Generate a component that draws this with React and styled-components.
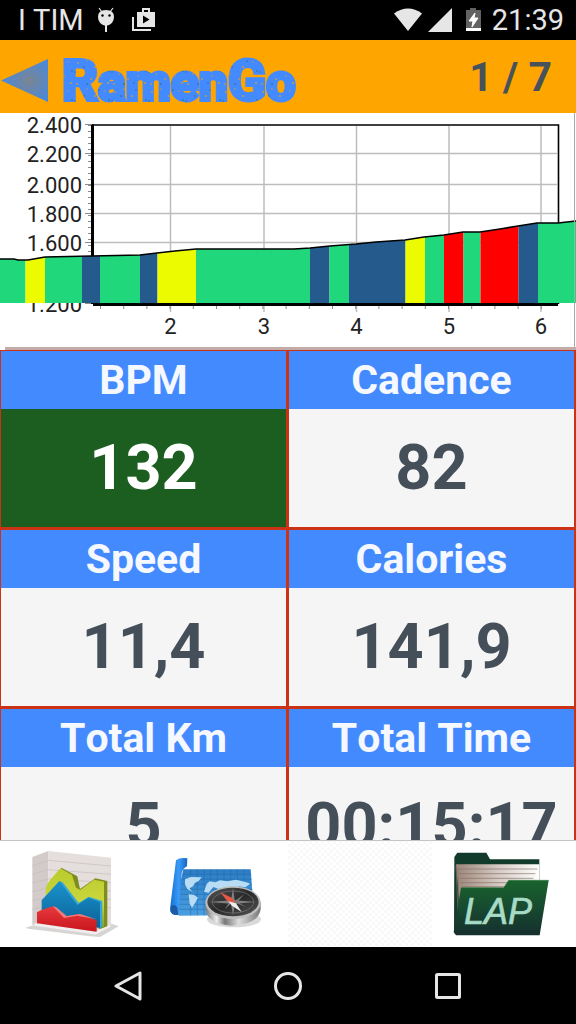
import React from "react";
import styled, { createGlobalStyle } from "styled-components";

const GlobalStyle = createGlobalStyle`
  * {
    box-sizing: border-box;
  }

  body {
    margin: 0;
    background: #000;
    font-family: Roboto, "Liberation Sans", sans-serif;
    font-kerning: none;
  }
`;

const Screen = styled.div`
  display: flex;
  flex-direction: column;
  height: 100vh;
  background: #fff;
  overflow: hidden;
`;

const StatusBar = styled.div`
  display: flex;
  align-items: center;
  justify-content: space-between;
  flex: none;
  height: 40px;
  padding: 0 12px 0 18px;
  background: #000;
  color: #e6e6e6;
  font-size: 29px;
`;

const StatusGroup = styled.div`
  display: flex;
  align-items: center;
  gap: ${(props) => props.$gap};
`;

const Header = styled.header`
  display: flex;
  align-items: center;
  flex: none;
  height: 73px;
  padding-right: 24px;
  background: #ffa500;
`;

const BackButton = styled.button`
  display: flex;
  padding: 0;
  border: 0;
  background: none;
  cursor: pointer;
`;

const Logo = styled.h1`
  display: flex;
  margin: 0;
`;

const PageCounter = styled.span`
  margin-left: auto;
  color: #47525a;
  font-size: 41px;
  font-weight: bold;
`;

const ChartPanel = styled.section`
  flex: none;

  svg {
    display: block;
    width: 100%;
    height: auto;
  }
`;

const MetricGrid = styled.main`
  display: grid;
  grid-template-columns: 1fr 1fr;
  align-content: start;
  flex: 1;
  min-height: 0;
  overflow: hidden;
`;

const MetricCell = styled.section`
  border: solid #cc3315;
  border-width: 1px 2px 2px 1px;
`;

const MetricTitle = styled.h2`
  margin: 0;
  background: #448aff;
  color: #f5f8ff;
  font-size: 41px;
  line-height: 58px;
  text-align: center;
`;

const MetricValue = styled.p`
  margin: 0;
  background: ${(props) => (props.$active ? "#1b5e20" : "#f5f5f5")};
  color: ${(props) => (props.$active ? "#fff" : "#444f59")};
  font-size: 63px;
  font-weight: bold;
  line-height: 118px;
  text-align: center;
  white-space: nowrap;
`;

const Toolbar = styled.nav`
  display: grid;
  grid-template-columns: repeat(4, 1fr);
  flex: none;
  height: 107px;
  border-top: 1px solid #c4c4c4;
  background: repeating-conic-gradient(#f9f9f9 0 25%, #fff 0 50%) 0 0 / 6px 6px;
`;

const ToolButton = styled.button`
  display: flex;
  justify-content: center;
  align-items: center;
  padding: 0;
  border: 0;
  background: #fff;
  cursor: pointer;
`;

const SystemNav = styled.nav`
  display: flex;
  flex: none;
  height: 77px;
  padding: 0 48px;
  background: #000;
`;

const SystemButton = styled.button`
  display: flex;
  flex: 1;
  justify-content: center;
  align-items: center;
  padding: 0;
  border: 0;
  background: none;
  cursor: pointer;

  svg {
    fill: none;
    stroke: #e6e6e6;
    stroke-width: 3;
    stroke-linejoin: round;
  }
`;

const metrics = [
  { title: "BPM", value: "132", active: true },
  { title: "Cadence", value: "82" },
  { title: "Speed", value: "11,4" },
  { title: "Calories", value: "141,9" },
  { title: "Total Km", value: "5" },
  { title: "Total Time", value: "00:15:17" },
];

const GREEN = "#20d77c";
const YELLOW = "#ecfb00";
const BLUE = "#255a8c";
const RED = "#ff0000";

// right edge and slope colour of each stretch of the climb
const bands = [
  [25.5, GREEN],
  [45, YELLOW],
  [82, GREEN],
  [100, BLUE],
  [140, GREEN],
  [157.5, BLUE],
  [196, YELLOW],
  [310, GREEN],
  [329.5, BLUE],
  [349, GREEN],
  [405.5, BLUE],
  [425, YELLOW],
  [444, GREEN],
  [463.5, RED],
  [480.5, GREEN],
  [518.5, RED],
  [538, BLUE],
  [576, GREEN],
];

const profile =
  "0,146 14,146 18,147 28,147 45,144 92,143 140,142 157,140 175,138 196,136 294,136 310,135 330,133 356,131 376,129 405,127 424,124 444,122 463,119 480,119 500,116 518,113 537,110 558,110 576,108";

const yTicks = [
  ["2.400", 12],
  ["2.200", 41],
  ["2.000", 72],
  ["1.800", 101],
  ["1.600", 130],
  ["1.200", 191],
];

const xTicks = [
  ["2", 170.5],
  ["3", 264],
  ["4", 356.5],
  ["5", 449],
  ["6", 541],
];

const ElevationChart = () => (
  <svg viewBox="0 0 576 237" role="img" aria-label="Elevation profile">
    <defs>
      <clipPath id="profile">
        <polygon points={`${profile} 576,190 0,190`} />
      </clipPath>
    </defs>
    <g stroke="#bdbdbd" strokeWidth="1.5">
      {yTicks.slice(1, 5).map(([label, y]) => (
        <line key={label} x1="94" x2="557" y1={y - 0.5} y2={y - 0.5} />
      ))}
      {xTicks.map(([label, x]) => (
        <line key={label} x1={x} x2={x} y1="13" y2="199" />
      ))}
    </g>
    <g stroke="#8c8c8c" strokeWidth="1">
      {yTicks.map(([label, y]) => (
        <line key={label} x1="85" x2="91" y1={y - 0.5} y2={y - 0.5} />
      ))}
      {Array.from({ length: 30 }, (_, i) => 12 + i * 6).map((y) => (
        <line key={y} x1="88" x2="91" y1={y + 0.5} y2={y + 0.5} />
      ))}
      {Array.from({ length: 20 }, (_, i) => 100.5 + i * 23.2).map((x) => (
        <line key={x} x1={x} x2={x} y1="193" y2="196" />
      ))}
    </g>
    <g fill="#222" fontSize="22">
      {yTicks.map(([label, y]) => (
        <text key={label} x="82" y={y + 8} textAnchor="end">
          {label}
        </text>
      ))}
      {xTicks.map(([label, x]) => (
        <text key={label} x={x} y="221" textAnchor="middle">
          {label}
        </text>
      ))}
    </g>
    <path d="M92 12H558.5V191" fill="none" stroke="#000" strokeWidth="1.6" />
    <path d="M92.5 11.5V191" stroke="#000" strokeWidth="3" />
    <path d="M93 191.5H558" stroke="#000" strokeWidth="3" />
    <g clipPath="url(#profile)">
      {bands.map(([end, color], i) => {
        const start = i ? bands[i - 1][0] : 0;
        return (
          <rect key={end} x={start} width={end - start} height="190" fill={color} />
        );
      })}
    </g>
    <polyline points={profile} fill="none" stroke="#000" strokeWidth="1.6" />
    <path d="M574.5 0V234" stroke="#a9a9a9" strokeWidth="1" />
    <path d="M5 235.5H576" stroke="#c3abaa" strokeWidth="3" />
  </svg>
);

const LogoMark = () => (
  <svg width="244" height="73" viewBox="60 40 244 73">
    <defs>
      <pattern id="grit" width="37" height="29" patternUnits="userSpaceOnUse">
        <rect width="37" height="29" fill="#448aff" />
        <g fill="#b59a5c">
          <circle cx="4" cy="5" r="1" />
          <circle cx="13" cy="2" r="0.8" />
          <circle cx="21" cy="9" r="1.1" />
          <circle cx="31" cy="4" r="0.7" />
          <circle cx="8" cy="16" r="0.8" />
          <circle cx="17" cy="21" r="1" />
          <circle cx="27" cy="18" r="0.8" />
          <circle cx="34" cy="25" r="1.1" />
          <circle cx="3" cy="26" r="0.9" />
        </g>
        <g fill="#3576bd">
          <circle cx="10" cy="9" r="1.1" />
          <circle cx="25" cy="3" r="1" />
          <circle cx="35" cy="13" r="1" />
          <circle cx="13" cy="26" r="1.1" />
          <circle cx="23" cy="25" r="0.9" />
          <circle cx="1" cy="14" r="0.9" />
        </g>
      </pattern>
    </defs>
    <text
      x="62"
      y="100"
      fontSize="56"
      fontWeight="bold"
      fill="url(#grit)"
      stroke="url(#grit)"
      strokeWidth="4"
    >
      R<tspan fontSize="52">amen</tspan>G<tspan fontSize="52">o</tspan>
    </text>
  </svg>
);

const ChartIcon = () => (
  <svg width="144" height="107" viewBox="0 30 432 321">
    <defs>
      <linearGradient id="lime" x2="0" y2="1">
        <stop offset="0" stopColor="#b9cc2c" />
        <stop offset="0.6" stopColor="#cbd63e" />
        <stop offset="1" stopColor="#8fa01c" />
      </linearGradient>
      <linearGradient id="azure" x2="0" y2="1">
        <stop offset="0" stopColor="#1b93cc" />
        <stop offset="1" stopColor="#0a6399" />
      </linearGradient>
      <linearGradient id="crimson" x2="0" y2="1">
        <stop offset="0" stopColor="#e63a3e" />
        <stop offset="1" stopColor="#c9151b" />
      </linearGradient>
    </defs>
    <path d="M76 290L110 280L335 278L356 286L300 318L270 316L84 293Z" fill="#d6d5d4" />
    <path d="M97 78L145 60V270L97 282Z" fill="#d2cbc9" />
    <path d="M145 60L333 80V285L145 272Z" fill="#e4dedc" />
    <path
      d="M97 104L145 88L333 105M97 130L145 116L333 130M97 156L145 144L333 155M97 182L145 172L333 180M97 208L145 200L333 205M97 234L145 228L333 230"
      fill="none"
      stroke="#c4bdbb"
      strokeWidth="2"
    />
    <path d="M104 280L286 306L330 284" fill="none" stroke="#f1eeed" strokeWidth="8" />
    <path d="M184 110L232 136L240 174L286 142L322 150V286L300 294L160 210Z" fill="#7e8d1d" />
    <path
      d="M137 170Q144 152 156 140L181 112L216 132L228 170L241 177L282 146L312 152V288L137 230Z"
      fill="url(#lime)"
    />
    <path d="M178 150L188 154L236 216L266 197L307 210V288L296 292L200 230Z" fill="#34a7d8" />
    <path
      d="M125 208L178 150L232 222L265 200L300 213V290L125 266Z"
      fill="url(#azure)"
    />
    <path
      d="M111 244L124 237L158 226L192 258L232 250L290 268V302L111 277Z"
      fill="url(#crimson)"
    />
    <path d="M158 226L168 228L200 255L240 249L290 265L232 254L192 261Z" fill="#f27a78" />
  </svg>
);

const MapIcon = () => (
  <svg width="144" height="107" viewBox="0 30 432 321">
    <defs>
      <linearGradient id="roll">
        <stop offset="0" stopColor="#176fd0" />
        <stop offset="0.5" stopColor="#3a9bf8" />
        <stop offset="1" stopColor="#1565c4" />
      </linearGradient>
      <linearGradient id="sheet" x2="0" y2="1">
        <stop offset="0" stopColor="#2b7cc4" />
        <stop offset="1" stopColor="#4a9fe0" />
      </linearGradient>
      <linearGradient id="steel">
        <stop offset="0" stopColor="#777" />
        <stop offset="0.2" stopColor="#eee" />
        <stop offset="0.35" stopColor="#777" />
        <stop offset="0.6" stopColor="#ddd" />
        <stop offset="1" stopColor="#777" />
      </linearGradient>
      <linearGradient id="dial" x2="1" y2="1">
        <stop offset="0" stopColor="#555" />
        <stop offset="0.5" stopColor="#292929" />
        <stop offset="1" stopColor="#555" />
      </linearGradient>
    </defs>
    <path d="M118 115H320L330 252L105 254L90 235Z" fill="url(#sheet)" />
    <path
      d="M116 130H322M114 145H323M112 160H324M110 175H325M108 190H326M106 205H327M104 220H328M102 235H329M140 115V253M160 115V253M180 115V253M200 115V253M220 115V253M240 115V253M260 115V253M280 115V253M300 115V253"
      stroke="#2368aa"
      strokeWidth="1.5"
    />
    <g fill="#b8dcf4">
      <path d="M123 145L140 138L173 139L164 150L153 155L147 166L137 172L145 183L130 174L123 160Z" />
      <path d="M134 190L149 191L162 200L155 213L144 230L137 218Z" />
      <path d="M188 159L197 151L214 154L228 148L250 151L276 146L307 154L319 158L304 169L284 166L272 178L248 170L226 175L208 168L194 185L180 182Z" />
    </g>
    <path
      d="M96 88Q108 78 130 82L129 106Q111 114 112 139L106 238Q104 257 87 250Q76 244 79 225Z"
      fill="url(#roll)"
    />
    <path d="M81 226Q93 216 100 230L103 252Q83 254 79 240Z" fill="#1b5ca5" />
    <ellipse cx="270" cy="265" rx="81" ry="24" fill="#d9d9d9" />
    <path d="M185 214V235Q190 279 263 284Q344 280 350 235V214Z" fill="url(#steel)" />
    <ellipse cx="267" cy="215" rx="83" ry="49" fill="#bcbcbc" />
    <ellipse cx="267" cy="213" rx="77" ry="43" fill="url(#dial)" />
    <ellipse cx="267" cy="213" rx="62" ry="33" fill="none" stroke="#777" strokeWidth="2" />
    <path d="M267 171L272 208L340 213L273 218L267 253L261 218L194 213L261 208Z" fill="#808080" />
    <path d="M267 213L301 190L280 213L309 229L267 213L242 235L256 213Z" fill="#777" />
    <path d="M229 184L263 200L276 217L250 211Z" fill="#e65845" />
    <path d="M252 211L276 217L293 243L264 224Z" fill="#eee" />
  </svg>
);

const LapIcon = () => (
  <svg width="144" height="107" viewBox="36 30 432 321">
    <defs>
      <linearGradient id="folder" x2="0" y2="1">
        <stop offset="0" stopColor="#1a632d" />
        <stop offset="0.5" stopColor="#174a30" />
        <stop offset="1" stopColor="#152f2e" />
      </linearGradient>
      <linearGradient id="paper">
        <stop offset="0" stopColor="#9c8579" />
        <stop offset="0.5" stopColor="#d5c9c3" />
        <stop offset="1" stopColor="#fff" />
      </linearGradient>
    </defs>
    <path d="M103 78L112 65H199L210 85H358V170L340 300H102Z" fill="#123b2c" />
    <path d="M108 100H358V154L350 230L124 285Z" fill="url(#paper)" />
    <path
      d="M112 114H352M115 128H346M119 142H340M122 155H334M126 167H328M108 103L116 285M114 112L119 278"
      stroke="#877267"
      strokeWidth="2"
    />
    <path d="M123 170H251L266 148H386L359 313H108L101 304Z" fill="url(#folder)" />
    <path d="M123 170H251L266 148H386" fill="none" stroke="#397b45" strokeWidth="2" />
    <text
      x="132"
      y="280"
      fill="#a8dbc5"
      stroke="#a8dbc5"
      strokeWidth="2"
      fontSize="108"
      fontStyle="italic"
    >
      LAP
    </text>
  </svg>
);

const App = () => {
  return (
    <Screen>
      <GlobalStyle />
      <StatusBar>
        <StatusGroup $gap="12px">
          <span>I TIM</span>
          <svg width="20" height="26" viewBox="0 0 20 26" fill="#e6e6e6">
            <path d="M3 1L6 5M17 1L14 5" stroke="#e6e6e6" strokeWidth="1.2" />
            <path d="M10 3Q18 3 18 10Q18 17 10 19Q2 17 2 10Q2 3 10 3Z" />
            <path d="M9 18H11V25H9Z" />
            <circle cx="6.5" cy="8.5" r="1.2" fill="#000" />
            <circle cx="13.5" cy="8.5" r="1.2" fill="#000" />
          </svg>
          <svg width="36" height="26" viewBox="-4 -1 36 26" fill="#e6e6e6">
            <path d="M1 9V22H19" fill="none" stroke="#e6e6e6" strokeWidth="2" />
            <path d="M11 4V1H17V4" fill="none" stroke="#e6e6e6" strokeWidth="2" />
            <path
              fillRule="evenodd"
              d="M5 4H23V19H5ZM11 7.5V15.5L17.5 11.5Z"
            />
          </svg>
        </StatusGroup>
        <StatusGroup $gap="6px">
          <svg width="28" height="24" viewBox="0 0 28 24" fill="#e6e6e6">
            <path d="M0 5.5Q14 -4.5 28 5.500L14 23Z" />
          </svg>
          <svg width="24" height="24" viewBox="0 0 24 24" fill="#e6e6e6">
            <path d="M24 0V24H0Z" />
          </svg>
          <svg width="28" height="24" viewBox="-8 0 28 24">
            <path d="M4 0H10V2H15V20H0V2H4Z" fill="#626262" />
            <path d="M0 20H15V23H0Z" fill="#fff" />
            <path d="M9 5L3 13H7L6 19L12 10H8Z" fill="#fff" stroke="#fff" />
          </svg>
          <span>21:39</span>
        </StatusGroup>
      </StatusBar>

      <Header>
        <BackButton aria-label="Back">
          <svg width="60" height="73" viewBox="0 40 60 73">
            <defs>
              <radialGradient id="arrow" cx="0.6" r="0.55">
                <stop offset="0" stopColor="#7b8591" />
                <stop offset="1" stopColor="#4989dc" />
              </radialGradient>
            </defs>
            <path d="M1 80.5L48 59V102Z" fill="url(#arrow)" />
          </svg>
        </BackButton>
        <Logo>
          <LogoMark />
        </Logo>
        <PageCounter>1 / 7</PageCounter>
      </Header>

      <ChartPanel>
        <ElevationChart />
      </ChartPanel>

      <MetricGrid>
        {metrics.map(({ title, value, active }) => (
          <MetricCell key={title}>
            <MetricTitle>{title}</MetricTitle>
            <MetricValue $active={active}>{value}</MetricValue>
          </MetricCell>
        ))}
      </MetricGrid>

      <Toolbar>
        <ToolButton aria-label="Charts">
          <ChartIcon />
        </ToolButton>
        <ToolButton aria-label="Map">
          <MapIcon />
        </ToolButton>
        <div />
        <ToolButton aria-label="Lap">
          <LapIcon />
        </ToolButton>
      </Toolbar>

      <SystemNav>
        <SystemButton aria-label="Back">
          <svg width="30" height="30" viewBox="0 0 30 30">
            <path d="M3 15L27 2V28Z" />
          </svg>
        </SystemButton>
        <SystemButton aria-label="Home">
          <svg width="30" height="30" viewBox="0 0 30 30">
            <circle cx="15" cy="15" r="12.5" />
          </svg>
        </SystemButton>
        <SystemButton aria-label="Recent apps">
          <svg width="30" height="30" viewBox="0 0 30 30">
            <rect x="3.5" y="3.5" width="23" height="23" rx="1" />
          </svg>
        </SystemButton>
      </SystemNav>
    </Screen>
  );
};

export default App;
